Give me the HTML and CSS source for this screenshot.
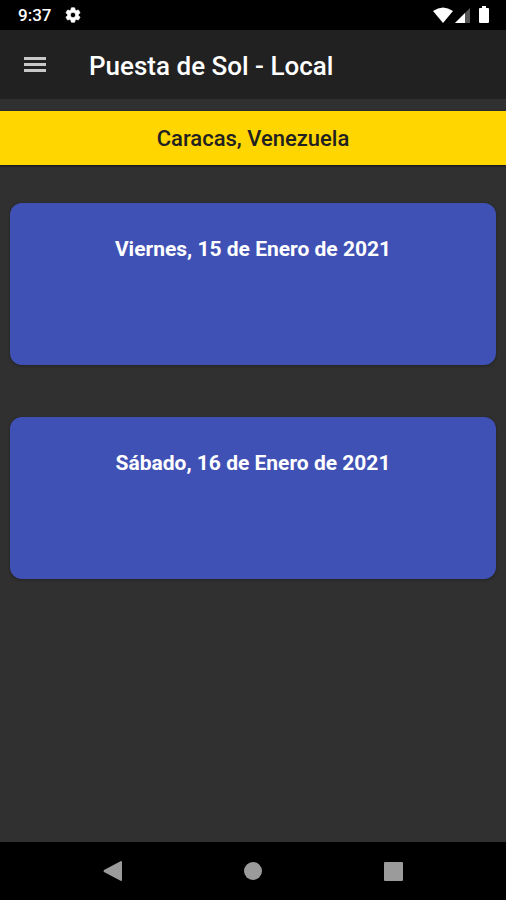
FILE: index.html
```
<!DOCTYPE html>
<html lang="es">

<head>
    <meta charset="UTF-8">
    <meta name="viewport" content="width=device-width, initial-scale=1.0">
    <title>Puesta de Sol - Local</title>
    <link rel="stylesheet" href="styles.css">
</head>

<body>
    <div class="status">
        <span class="time">9:37</span>
        <svg class="gear" width="18" height="18" viewBox="0 0 24 24">
            <path fill="#fff" stroke="#fff" stroke-width="1" d="M19.14 12.94c.04-.3.06-.61.06-.94 0-.32-.02-.64-.07-.94l2.03-1.58c.18-.14.23-.41.12-.61l-1.92-3.32c-.12-.22-.37-.29-.59-.22l-2.39.96c-.5-.38-1.03-.7-1.62-.94l-.36-2.54c-.04-.24-.24-.41-.48-.41h-3.84c-.24 0-.43.17-.47.41l-.36 2.54c-.59.24-1.13.57-1.62.94l-2.39-.96c-.22-.08-.47 0-.59.22L2.74 8.87c-.12.21-.08.47.12.61l2.03 1.58c-.05.3-.09.63-.09.94s.02.64.07.94l-2.03 1.58c-.18.14-.23.41-.12.61l1.92 3.32c.12.22.37.29.59.22l2.39-.96c.5.38 1.03.7 1.62.94l.36 2.54c.05.24.24.41.48.41h3.84c.24 0 .44-.17.47-.41l.36-2.54c.59-.24 1.13-.56 1.62-.94l2.39.96c.22.08.47 0 .59-.22l1.92-3.32c.12-.22.07-.47-.12-.61l-2.01-1.58zM12 15.6c-1.98 0-3.6-1.62-3.6-3.6s1.62-3.6 3.6-3.6 3.6 1.62 3.6 3.6-1.62 3.6-3.6 3.6z"/>
        </svg>
        <svg class="signals" width="57" height="18" viewBox="0 0 57 18">
            <path fill="#fff" d="M0 5Q10-2 20 5L10 17z"/>
            <path fill="#555" d="M37 2v15H22z"/>
            <path fill="#fff" d="M32 7v10H22z"/>
            <path fill="#fff" d="M49 0h4v2h2q1 0 1 1v13q0 1-1 1h-8q-1 0-1-1V3q0-1 1-1h2z"/>
        </svg>
    </div>

    <header class="header">
        <button class="menu" type="button" aria-label="Menú">
            <svg width="24" height="16" viewBox="0 0 24 16">
                <path fill="#c8c8c8" d="M1 0h22v3H1zM1 6h22v3H1zM1 12h22v3H1z"/>
            </svg>
        </button>
        <h1>Puesta de Sol - Local</h1>
    </header>

    <main class="content">
        <h2 class="city">Caracas, Venezuela</h2>
        <div class="list">
            <section class="card">
                <h3>Viernes, 15 de Enero de 2021</h3>
            </section>
            <section class="card">
                <h3>Sábado, 16 de Enero de 2021</h3>
            </section>
        </div>
    </main>

    <nav class="nav">
        <button type="button" aria-label="Atrás">
            <svg width="20" height="22" viewBox="0 0 20 22">
                <path fill="#9b9b9b" d="M18 1q1 0 1 1v18q0 1-1 1L1 12q-1-1 0-2z"/>
            </svg>
        </button>
        <button type="button" aria-label="Inicio">
            <svg width="20" height="20" viewBox="0 0 20 20">
                <circle cx="10" cy="10" r="9" fill="#9b9b9b"/>
            </svg>
        </button>
        <button type="button" aria-label="Recientes">
            <svg width="20" height="20" viewBox="0 0 20 20">
                <rect width="19" height="19" x="1" y="1" rx="1" fill="#9b9b9b"/>
            </svg>
        </button>
    </nav>
</body>

</html>
```

FILE: styles.css
```
* {
    box-sizing: border-box;
}

body {
    display: flex;
    flex-direction: column;
    min-height: 100vh;
    margin: 0;
    background-color: #303030;
    color: #fff;
    font-family: Roboto, "Liberation Sans", sans-serif;
}

h1,
h2,
h3 {
    margin: 0;
    font-weight: 500;
}

button {
    display: flex;
    align-items: center;
    justify-content: center;
    padding: 0;
    border: none;
    background: none;
}

/* barra de estado */
.status {
    display: flex;
    align-items: center;
    height: 30px;
    padding: 0 16px 0 18px;
    background-color: #000;
}

.time {
    font-size: 17px;
    font-weight: 500;
    line-height: 32px;
}

.gear {
    margin-left: 13px;
}

.signals {
    margin-left: auto;
}

/* cabecera */
.header {
    display: flex;
    align-items: center;
    height: 69px;
    padding: 0 16px;
    background-color: #212121;
}

.menu {
    width: 38px;
    height: 48px;
    margin-right: 35px;
}

.header h1 {
    padding-top: 2px;
    font-size: 26px;
    line-height: 32px;
}

.content {
    flex: 1;
    padding-top: 12px;
}

.city {
    padding: 12px 12px 10px;
    background-color: #ffd600;
    color: #212121;
    font-size: 22px;
    line-height: 32px;
    text-align: center;
    box-shadow: 0 1px 2px #111;
}

.list {
    display: grid;
    gap: 52px;
    padding: 38px 10px;
}

.card {
    min-height: 162px;
    padding: 30px 16px;
    border-radius: 12px;
    background-color: #3f51b5;
    box-shadow: 0 1px 3px #222;
    text-align: center;
}

.card h3 {
    font-size: 21px;
    font-weight: 700;
    line-height: 32px;
}

/* botones del sistema */
.nav {
    display: flex;
    justify-content: center;
    gap: 92px;
    height: 58px;
    background-color: #000;
}

.nav button {
    width: 48px;
}
```
